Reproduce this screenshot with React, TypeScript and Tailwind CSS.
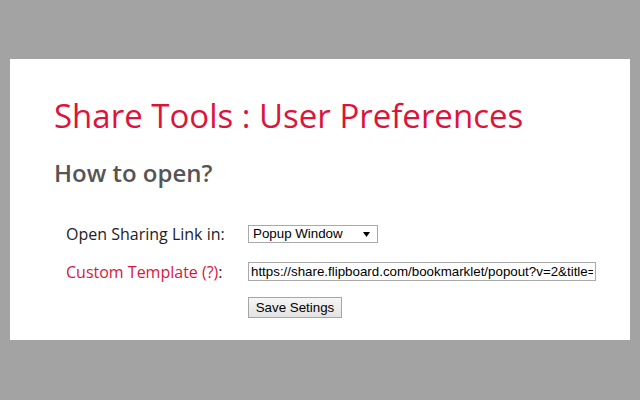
export default function App() {
  return (
    <div className="h-[400px] w-[640px] bg-[#a3a3a3] px-[10px] pt-[59px]">
      <div className="h-[281px] bg-white pl-[44px] pt-[33px] font-['Open_Sans',sans-serif]">
        <h1 className="text-[33px] leading-[48px] text-[#dc143c]">Share Tools : User Preferences</h1>
        <h2 className="mt-[17px] text-[24px] leading-[32px] font-semibold text-[#555]">How to open?</h2>

        <div className="mt-[36px] flex flex-col pl-[12px]">
          <div className="flex h-[18px] items-center">
            <label className="w-[182px] text-[16px] leading-[18px] text-[#222]">Open Sharing Link in:</label>
            <div className="relative w-[130px]">
              <select
                defaultValue="popup"
                className="block h-[18px] w-[130px] appearance-none border border-[#a9a9a9] bg-white pl-[4px] font-['Liberation_Sans',Arial,sans-serif] text-[13.33px] leading-[16px] text-black"
              >
                <option value="popup">Popup Window</option>
                <option value="tab">New Tab</option>
              </select>
              <svg className="pointer-events-none absolute right-[8px] top-[7px]" width="7" height="5" viewBox="0 0 7 5">
                <path d="M0 0H7L3.5 5Z" fill="#000" />
              </svg>
            </div>
          </div>

          <div className="mt-[19px] flex h-[19px] items-center">
            <label className="w-[182px] text-[16px] leading-[18px] text-[#222]">
              <span className="text-[#dc143c]">Custom Template (?)</span>:
            </label>
            <input
              readOnly
              value="https://share.flipboard.com/bookmarklet/popout?v=2&title="
              className="block h-[19px] w-[348px] border border-[#a9a9a9] bg-white px-[2px] font-['Liberation_Sans',Arial,sans-serif] text-[13.33px] text-black outline-none"
            />
          </div>

          <div className="mt-[16px] flex h-[21px] items-center">
            <div className="w-[182px]" />
            <button className="h-[21px] w-[94px] border border-[#a6a6a6] bg-gradient-to-b from-[#f6f6f6] to-[#e3e3e3] font-['Liberation_Sans',Arial,sans-serif] text-[13.33px] leading-[16px] text-black">
              Save Setings
            </button>
          </div>
        </div>
      </div>
    </div>
  );
}
